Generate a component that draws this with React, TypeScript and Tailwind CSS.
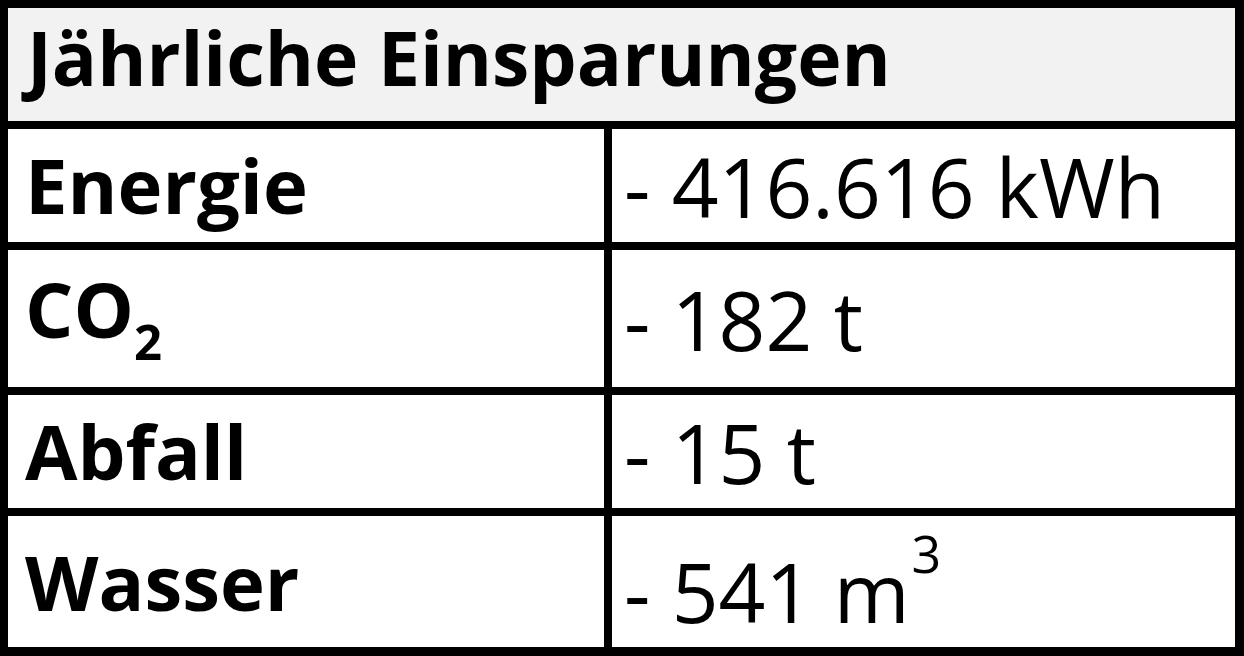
import React from "react";

const font = { fontFamily: '"Open Sans", "Liberation Sans", sans-serif' };

export default function App() {
  return (
    <div className="w-[1244px] h-[656px] bg-black text-black" style={font}>
      <div className="grid grid-cols-[596px_623px] grid-rows-[113px_113px_137px_113px_131px] gap-[8px] pl-[8px] pt-[8px] pr-[9px] pb-[9px]">
        <div className="col-span-2 bg-[#f2f2f2] flex items-center pl-[19px] pb-[14px] text-[75px] font-bold leading-none">
          Jährliche Einsparungen
        </div>

        <div className="bg-white flex items-center pl-[17px] pb-[2px] text-[76px] font-bold leading-none">Energie</div>
        <div className="bg-white flex items-center pl-[12px] text-[82px] leading-none">- 416.616 kWh</div>

        <div className="bg-white flex items-center pl-[17px] text-[76px] font-bold leading-none">
          <span>
            CO<sub className="text-[49px] bottom-0 align-[-22px] leading-none">2</sub>
          </span>
        </div>
        <div className="bg-white flex items-center pl-[12px] text-[82px] leading-none">- 182 t</div>

        <div className="bg-white flex items-center pl-[17px] pb-[2px] text-[76px] font-bold leading-none">Abfall</div>
        <div className="bg-white flex items-center pl-[12px] text-[82px] leading-none">- 15 t</div>

        <div className="bg-white flex items-center pl-[17px] text-[76px] font-bold leading-none">Wasser</div>
        <div className="bg-white flex items-center pl-[12px] pb-[4px] text-[82px] leading-none">
          <span>
            - 541 m<sup className="text-[52px] top-0 align-[50px] leading-none ml-[2px]">3</sup>
          </span>
        </div>
      </div>
    </div>
  );
}
